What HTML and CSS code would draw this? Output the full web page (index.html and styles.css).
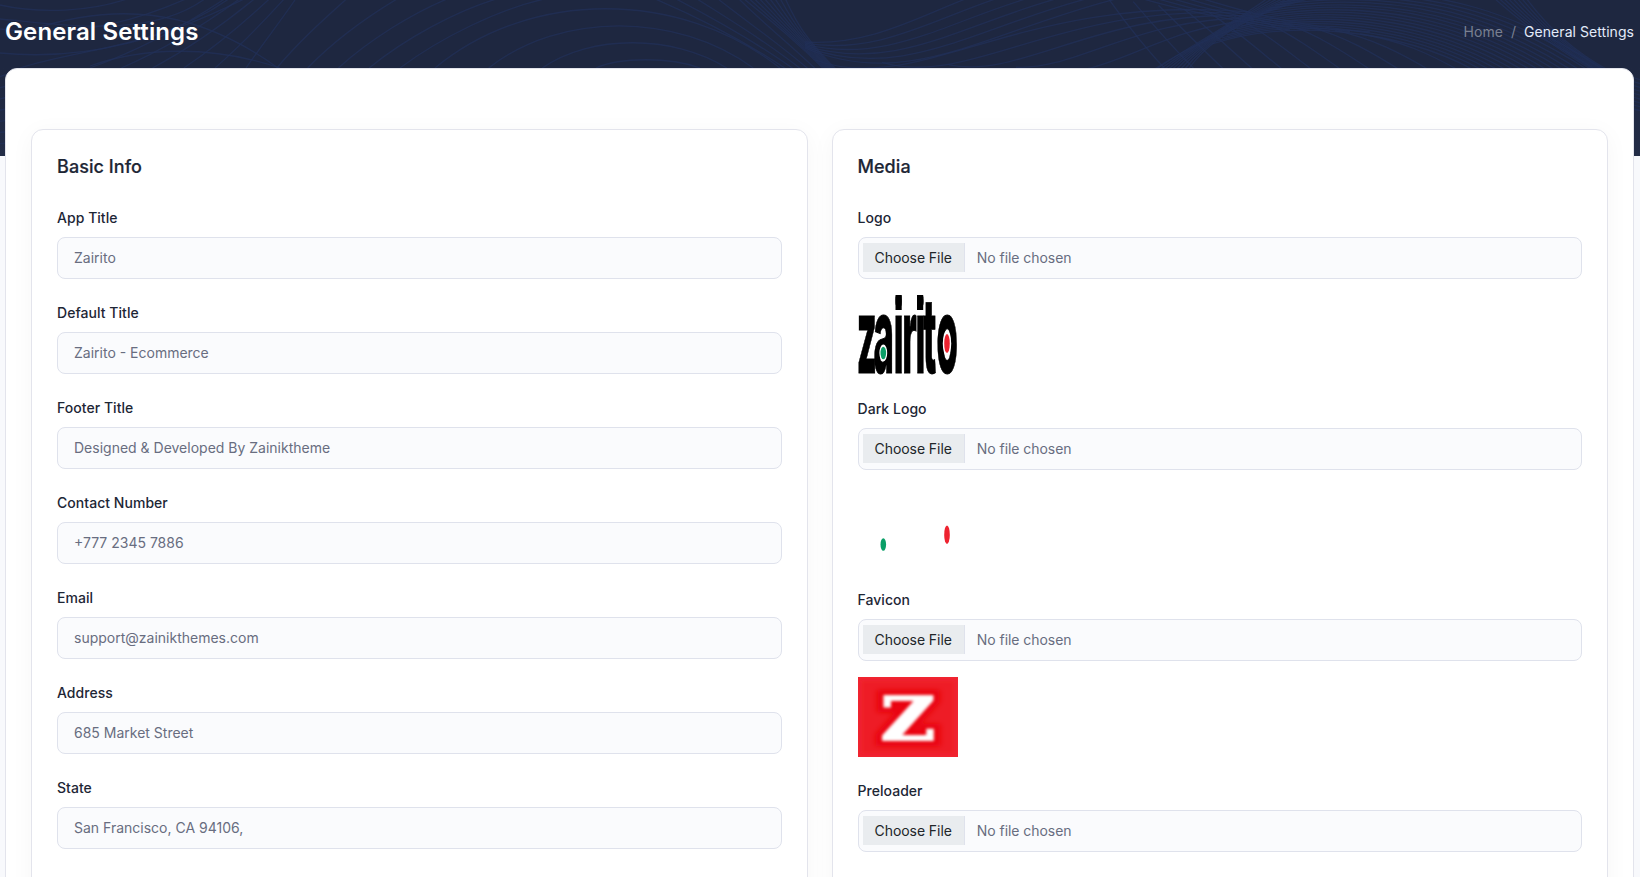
FILE: index.html
```html
<!DOCTYPE html>
<html lang="en">
<head>
<meta charset="utf-8">
<title>General Settings</title>
<link rel="stylesheet" href="styles.css">
</head>
<body>
<svg class="waves" id="waves" viewBox="0 0 1640 156" width="1640" height="156" aria-hidden="true"></svg>
<div class="page">
  <header class="page-head">
    <h1 class="page-title">General Settings</h1>
    <nav class="crumbs"><span class="crumb">Home</span><span class="crumb">/</span><span class="crumb crumb-active">General Settings</span></nav>
  </header>
  <main class="panel">
    <section class="card">
      <h2 class="card-title">Basic Info</h2>
      <label class="field"><span class="label">App Title</span><input class="control" value="Zairito"></label>
      <label class="field"><span class="label">Default Title</span><input class="control" value="Zairito - Ecommerce"></label>
      <label class="field"><span class="label">Footer Title</span><input class="control" value="Designed &amp; Developed By Zainiktheme"></label>
      <label class="field"><span class="label">Contact Number</span><input class="control" value="+777 2345 7886"></label>
      <label class="field"><span class="label">Email</span><input class="control" value="support@zainikthemes.com"></label>
      <label class="field"><span class="label">Address</span><input class="control" value="685 Market Street"></label>
      <label class="field"><span class="label">State</span><input class="control" value="San Francisco, CA 94106,"></label>
    </section>
    <section class="card">
      <h2 class="card-title">Media</h2>
      <div class="field"><span class="label">Logo</span>
        <div class="control file"><span class="file-btn">Choose File</span><span class="file-name">No file chosen</span></div>
        <svg class="preview" viewBox="0 0 100 80" width="100" height="80">
          <text class="logo-text" transform="translate(0 77.5) scale(.33 1)" x="-4 47 108 134 174 197 238">zairito</text>
          <rect x="37.5" width="6.2" height="15"/>
          <rect x="59" width="6.2" height="15"/>
          <ellipse cx="25.3" cy="58" rx="3.9" ry="8.5" fill="#fff"/>
          <ellipse cx="25.3" cy="58" rx="2.8" ry="6.3" fill="#0a9f67"/>
          <ellipse cx="89" cy="48.5" rx="4.2" ry="13" fill="#fff"/>
          <ellipse cx="89" cy="48.5" rx="2.8" ry="9.5" fill="#ee2330"/>
        </svg>
      </div>
      <div class="field"><span class="label">Dark Logo</span>
        <div class="control file"><span class="file-btn">Choose File</span><span class="file-name">No file chosen</span></div>
        <svg class="preview" viewBox="0 0 100 80" width="100" height="80">
          <ellipse cx="25.3" cy="58.5" rx="2.8" ry="6.3" fill="#0a9f67"/>
          <ellipse cx="89" cy="48.7" rx="2.8" ry="9.3" fill="#ee2330"/>
        </svg>
      </div>
      <div class="field"><span class="label">Favicon</span>
        <div class="control file"><span class="file-btn">Choose File</span><span class="file-name">No file chosen</span></div>
        <svg class="preview" viewBox="0 0 100 80" width="100" height="80">
          <defs>
            <filter id="soft" x="-20%" y="-20%" width="140%" height="140%"><feGaussianBlur stdDeviation="1.4"/></filter>
            <filter id="halo" x="-30%" y="-30%" width="160%" height="160%"><feGaussianBlur stdDeviation="2.6"/></filter>
          </defs>
          <rect width="100" height="80" fill="#f02430"/>
          <rect x="4" y="4" width="92" height="72" fill="#ee1c27" filter="url(#soft)"/>
          <g transform="translate(22.5 62.5) scale(1.25 1)">
            <text class="fav-halo" filter="url(#halo)">Z</text>
            <text class="fav-text" filter="url(#soft)">Z</text>
          </g>
        </svg>
      </div>
      <div class="field"><span class="label">Preloader</span>
        <div class="control file"><span class="file-btn">Choose File</span><span class="file-name">No file chosen</span></div>
      </div>
    </section>
  </main>
</div>
<script src="waves.js"></script>
</body>
</html>
```
FILE: styles.css
```css
* { box-sizing: border-box; }
body { margin: 0; height: 877px; overflow: hidden; position: relative; background: #f8f9fc; font-family: Inter, sans-serif; font-size: 14px; color: #1d2635; }
.waves { position: absolute; left: 0; top: 0; background: linear-gradient(#1e2740 0 68px, #232d47 156px); }
.waves path { fill: none; stroke: #213058; stroke-width: 1.3; opacity: .75; }
.page { position: relative; height: 877px; overflow: hidden; padding: 0 6px 0 5px; }
.page-head { height: 68px; padding-bottom: 5px; display: flex; align-items: center; justify-content: space-between; }
.page-title { margin: 0; font-size: 24px; font-weight: 600; letter-spacing: .12px; color: #fff; }
.crumbs { display: flex; gap: 8px; color: #7a8091; letter-spacing: .05px; }
.crumb-active { color: #e3ebfa; }
.panel { display: grid; grid-template-columns: 1fr 1fr; gap: 24px; background: #fff; border: 1px solid #e3e4ec; border-radius: 12px; padding: 60px 25px; height: 900px; }
.card { background: #fff; border: 1px solid #e3e4ec; border-radius: 12px; padding: 25px; height: 860px; box-shadow: 0 4px 24px rgba(40,40,60,.04); }
.card-title { margin: 0 0 29px; font-size: 18px; line-height: 24px; font-weight: 500; letter-spacing: .06px; -webkit-text-stroke: .2px #1d2635; }
.field { display: block; margin-bottom: 24px; }
.label { display: block; line-height: 20px; margin-bottom: 9px; font-weight: 450; letter-spacing: .04px; }
.control { display: flex; align-items: center; width: 100%; height: 42px; border: 1px solid #dfe2ec; border-radius: 8px; background: #fafbfd; padding: 0 16px 1px; font: 400 14px Inter, sans-serif; color: #686d80; outline: none; }
.file { padding: 0 4px 1px; gap: 12px; letter-spacing: -.06px; }
.file-btn { height: 29px; line-height: 29px; padding: 0 12px; background: #e9ecef; border-right: 1px solid #dfe2ec; color: #212529; }
.preview { display: block; margin: 16px 0 0; overflow: hidden; }
.logo-text { font: 800 105px Inter, sans-serif; fill: #000; stroke: #000; stroke-width: 1px; }
.fav-text, .fav-halo { font: 700 60px "DejaVu Serif", serif; fill: #fff; stroke: #fff; stroke-width: 2px; }
.fav-halo { fill: #e90008; stroke: #e90008; stroke-width: 12px; }
```
FILE: waves.js
```js
// Each family blends a first cubic curve into a last one: [x0,y0, c1, c2, x1,y1].
const families = [
  { n: 6, a: [246, 68, 264, 42, 280, 22, 295, 0], b: [400, 68, 440, 38, 500, 8, 549, -2] },
  { n: 5, a: [90, 68, 140, 50, 190, 22, 226, -2], b: [215, 68, 240, 46, 265, 20, 285, -2] },
  { n: 4, a: [435, 68, 530, -11, 680, -11, 780, 68], b: [596, 68, 620, 57, 670, 57, 700, 68] },
  { n: 5, a: [653, -2, 700, 18, 750, 44, 795, 75], b: [738, -2, 765, 25, 790, 44, 822, 75] },
  { n: 9, a: [743, -2, 770, 20, 795, 40, 830, 75], b: [785, -2, 795, 20, 805, 40, 842, 75] },
  { n: 6, a: [805, 42, 870, 46, 920, 16, 968, -2], b: [805, 48, 910, 92, 990, 30, 1120, -2] },
  { n: 6, a: [815, 60, 920, 98, 1020, -8, 1250, 12], b: [1150, 72, 1180, 52, 1215, 34, 1255, 22] },
  { n: 11, a: [1108, -2, 1125, 22, 1145, 48, 1168, 72], b: [1360, 34, 1400, 40, 1430, 54, 1462, 72] },
  { n: 5, a: [1140, -2, 1180, 10, 1230, 20, 1290, 30], b: [1200, -2, 1240, 10, 1290, 26, 1370, 32] },
  { n: 9, a: [1155, 70, 1190, 46, 1235, 22, 1268, -2], b: [1188, 70, 1204, 46, 1244, 14, 1312, -2] },
  { n: 17, a: [1212, 44, 1290, 18, 1400, 30, 1474, 70], b: [1290, -4, 1440, -22, 1530, 20, 1604, 70] },
  { n: 8, a: [1494, -2, 1530, 30, 1560, 50, 1592, 70], b: [1526, -2, 1550, 30, 1575, 52, 1608, 70] },
  { n: 3, a: [0, 5, 40, 14, 90, 12, 130, -2], b: [0, 53, 90, 62, 170, 36, 246, -2] },
  { n: 2, a: [0, 19, 60, 24, 150, 40, 206, -2], b: [20, 68, 80, 48, 160, 48, 230, -2] },
  { n: 2, a: [30, 30, 110, 4, 190, 4, 278, 68], b: [90, 66, 140, 48, 210, 44, 280, 68] },
  { n: 7, a: [-5, 78, 0, 77, 4, 75, 8, 74], b: [-5, 144, 0, 143, 4, 144, 8, 143] },
  { n: 9, a: [1630, 76, 1634, 78, 1637, 79, 1642, 80], b: [1630, 108, 1634, 109, 1637, 110, 1642, 111] }
];
const svg = document.getElementById('waves');
for (const { n, a, b } of families) {
  for (let i = 0; i < n; i++) {
    const t = i / (n - 1);
    const p = a.map((v, k) => (v + (b[k] - v) * t).toFixed(1));
    const path = document.createElementNS('http://www.w3.org/2000/svg', 'path');
    path.setAttribute('d', `M${p[0]} ${p[1]}C${p.slice(2).join(' ')}`);
    svg.appendChild(path);
  }
}
```
